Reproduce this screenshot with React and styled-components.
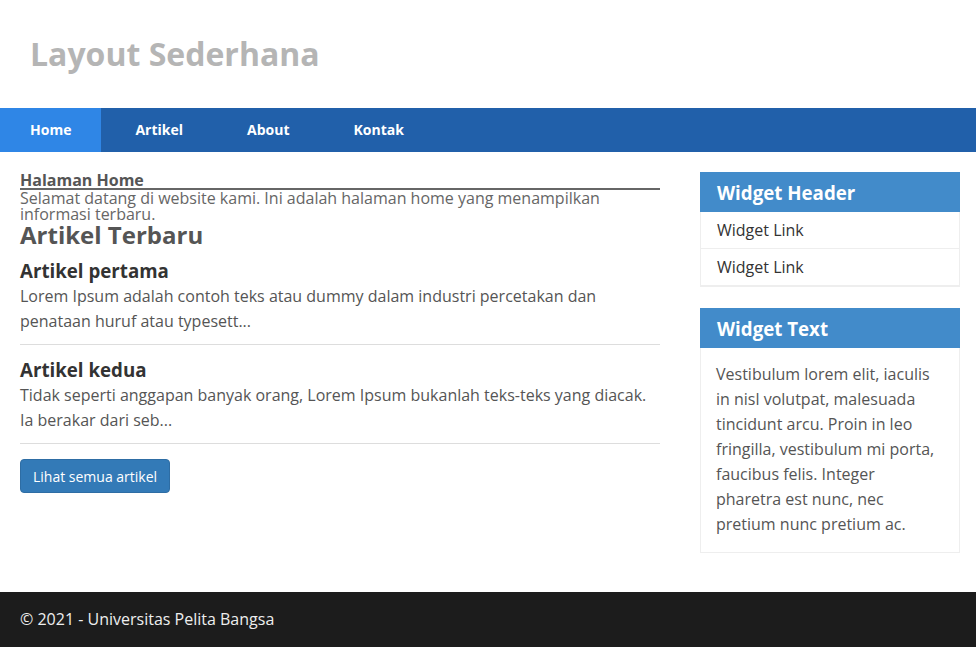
import React from 'react';
import styled, { createGlobalStyle } from 'styled-components';

const GlobalStyle = createGlobalStyle`
  * { box-sizing: border-box; }
  html, body { margin: 0; padding: 0; background: #fff; }
  body { font-family: "Open Sans", "Noto Sans", sans-serif; color: #555; }
  #root { min-height: 100vh; display: flex; flex-direction: column; }
`;

const navItems = ['Home', 'Artikel', 'About', 'Kontak'];

const articles = [
  {
    title: 'Artikel pertama',
    excerpt: 'Lorem Ipsum adalah contoh teks atau dummy dalam industri percetakan dan penataan huruf atau typesett...',
  },
  {
    title: 'Artikel kedua',
    excerpt: 'Tidak seperti anggapan banyak orang, Lorem Ipsum bukanlah teks-teks yang diacak. Ia berakar dari seb...',
  },
];

const App = () => {
  return (
    <Page>
      <GlobalStyle />
      <Header>
        <h1>Layout Sederhana</h1>
      </Header>

      <Nav>
        {navItems.map((item, i) => (
          <NavLink key={item} href="#" active={i === 0 ? 1 : 0}>
            {item}
          </NavLink>
        ))}
      </Nav>

      <Main>
        <Content>
          <PageTitle>Halaman Home</PageTitle>
          <Intro>
            Selamat datang di website kami. Ini adalah halaman home yang menampilkan informasi terbaru.
          </Intro>
          <SectionTitle>Artikel Terbaru</SectionTitle>
          {articles.map((a) => (
            <Article key={a.title}>
              <h3>{a.title}</h3>
              <p>{a.excerpt}</p>
            </Article>
          ))}
          <Button>Lihat semua artikel</Button>
        </Content>

        <Sidebar>
          <Widget>
            <WidgetHeader>Widget Header</WidgetHeader>
            <WidgetList>
              <li><a href="#">Widget Link</a></li>
              <li><a href="#">Widget Link</a></li>
            </WidgetList>
          </Widget>
          <Widget>
            <WidgetHeader>Widget Text</WidgetHeader>
            <WidgetBody>
              Vestibulum lorem elit, iaculis in nisl volutpat, malesuada tincidunt arcu. Proin in leo
              fringilla, vestibulum mi porta, faucibus felis. Integer pharetra est nunc, nec pretium
              nunc pretium ac.
            </WidgetBody>
          </Widget>
        </Sidebar>
      </Main>

      <Footer>© 2021 - Universitas Pelita Bangsa</Footer>
    </Page>
  );
};

// Styled components

const Page = styled.div`
  flex: 1;
  display: flex;
  flex-direction: column;
`;

const Header = styled.header`
  height: 108px;
  display: flex;
  align-items: center;
  padding: 0 30px 2px;
  background: #fff;

  h1 {
    margin: 0;
    font-size: 32px;
    font-weight: 700;
    color: #b5b5b5;
  }
`;

const Nav = styled.nav`
  display: flex;
  gap: 4px;
  height: 44px;
  background: #2160aa;
`;

const NavLink = styled.a`
  display: block;
  padding: 0 30px;
  line-height: 44px;
  font-size: 14px;
  font-weight: 700;
  color: #fff;
  text-decoration: none;
  background: ${(props) => (props.active ? '#2f86e6' : 'transparent')};
`;

const Main = styled.main`
  flex: 1;
  display: grid;
  grid-template-columns: 640px 260px;
  column-gap: 40px;
  align-items: start;
  padding: 20px 16px 36px 20px;
`;

const Content = styled.section`
  display: flex;
  flex-direction: column;
  align-items: flex-start;
`;

const PageTitle = styled.h2`
  align-self: stretch;
  margin: 0;
  font-size: 16px;
  line-height: 16px;
  font-weight: 700;
  color: #555;
  border-bottom: 2px solid #666;
`;

const Intro = styled.p`
  margin: 0;
  font-size: 16px;
  line-height: 16px;
  color: #666;
`;

const SectionTitle = styled.h2`
  margin: 0;
  padding-top: 2px;
  font-size: 24px;
  line-height: 22px;
  font-weight: 700;
  color: #555;
`;

const Article = styled.article`
  align-self: stretch;
  padding: 11px 0 10px;
  border-bottom: 1px solid #ddd;

  h3 {
    margin: 0;
    font-size: 18.72px;
    line-height: 27px;
    font-weight: 700;
    color: #333;
  }

  p {
    margin: 0;
    font-size: 16px;
    line-height: 25px;
    color: #555;
  }
`;

const Button = styled.button`
  margin-top: 15px;
  height: 34px;
  padding: 0 12px;
  font-family: inherit;
  font-size: 14px;
  color: #fff;
  background: #337ab7;
  border: 1px solid #2e6da4;
  border-radius: 4px;
  cursor: pointer;
`;

const Sidebar = styled.aside`
  display: flex;
  flex-direction: column;
  gap: 21px;
`;

const Widget = styled.div`
  border: 1px solid #eee;
  background: #fff;
`;

const WidgetHeader = styled.h3`
  margin: -1px -1px 0;
  height: 40px;
  padding: 0 17px;
  display: flex;
  align-items: center;
  font-size: 18.72px;
  font-weight: 700;
  color: #fff;
  background: #428bca;
`;

const WidgetList = styled.ul`
  list-style: none;
  margin: 0;
  padding: 0;

  li {
    border-bottom: 1px solid #eee;
  }

  a {
    display: block;
    padding: 0 16px;
    line-height: 36px;
    font-size: 16px;
    color: #333;
    text-decoration: none;
  }
`;

const WidgetBody = styled.p`
  margin: 0;
  padding: 14px 15px 15px;
  font-size: 16px;
  line-height: 25px;
  color: #555;
`;

const Footer = styled.footer`
  padding: 17px 20px;
  font-size: 16px;
  line-height: 21px;
  color: #eee;
  background: #1c1c1c;
`;

export default App;
